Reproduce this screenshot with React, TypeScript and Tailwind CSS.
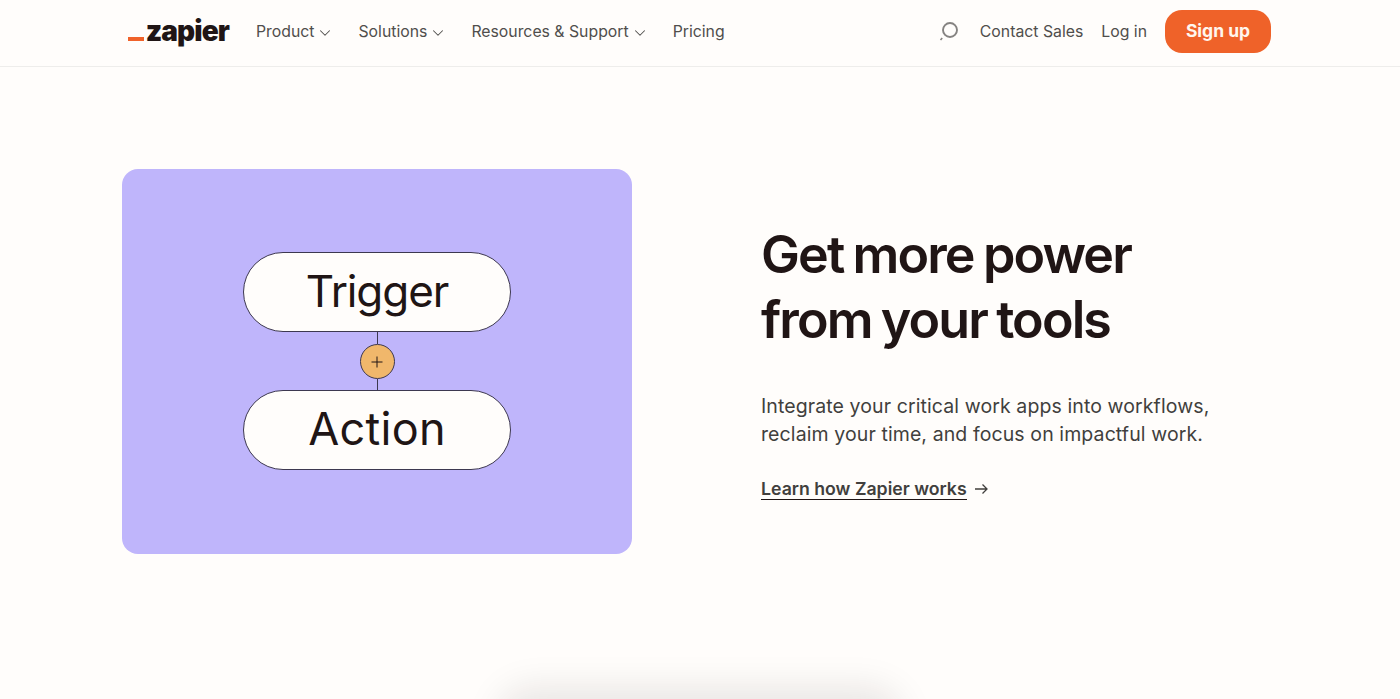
import { ChevronDown } from 'lucide-react';
import clsx from 'clsx';

const font = { fontFamily: 'Inter, "Liberation Sans", sans-serif' };

function NavItem({ label, menu = true }: { label: string; menu?: boolean }) {
    return (
        <a className="flex items-center gap-[2px] pt-[2px] text-[15.8px] leading-6 text-[#504e4c]">
            {label}
            {menu && <ChevronDown size={18} strokeWidth={1.4} className="mt-[1px]" />}
        </a>
    );
}

function Pill({ label, className }: { label: string; className?: string }) {
    return (
        <div
            className={clsx(
                'flex h-[80px] w-[268px] items-center justify-center rounded-full border border-[#3d3850] bg-[#fffdfb] pb-[3px] font-[440] leading-none text-[#201515]',
                className,
            )}
        >
            {label}
        </div>
    );
}

export default function App() {
    return (
        <div className="h-[699px] overflow-hidden bg-[#fffdfb] font-[Inter]">
            {/* Top nav */}
            <header className="flex h-[67px] items-center justify-between border-b border-[#eeedeb] pb-[4px] pl-[128px] pr-[129px]">
                <div className="flex items-center">
                    <div className="relative flex h-8 w-[101px] items-center justify-end pb-[1px]">
                        <span className="absolute bottom-[6px] left-0 h-[4px] w-[16px] bg-[#f0622a]" />
                        <span className="text-[28px] font-black leading-none tracking-[-0.9px] text-[#201515]">zapier</span>
                    </div>
                    <nav className="ml-[27px] flex items-center gap-[24px]">
                        <NavItem label="Product" />
                        <NavItem label="Solutions" />
                        <NavItem label="Resources & Support" />
                        <NavItem label="Pricing" menu={false} />
                    </nav>
                </div>
                <div className="flex items-center">
                    <svg width="20" height="20" viewBox="0 0 20 20" fill="none" className="mr-[21px]">
                        <circle cx="11" cy="9" r="7" stroke="#858381" strokeWidth="1.9" />
                        <path d="M1.5 19 L3.2 17" stroke="#858381" strokeWidth="1.6" />
                    </svg>
                    <NavItem label="Contact Sales" menu={false} />
                    <span className="ml-[18px]">
                        <NavItem label="Log in" menu={false} />
                    </span>
                    <a className="ml-[18px] flex h-[43px] w-[106px] items-center justify-center rounded-[17px] bg-[#ef6229] text-[17.5px] font-bold text-[#fff6ee]">
                        Sign up
                    </a>
                </div>
            </header>

            {/* Hero */}
            <section className="mt-[102px] flex items-center pl-[122px]">
                <div className="flex h-[385px] w-[510px] flex-col items-center justify-center rounded-[16px] bg-[#bfb5fb] pb-[1px]">
                    <Pill label="Trigger" className="text-[44px] tracking-[-1.1px]" />
                    <div className="h-[12px] w-px bg-[#3d3850]" />
                    <div className="flex h-[35px] w-[35px] items-center justify-center rounded-full border border-[#3d3850] bg-[#f0b76b] text-[#201515]">
                        <svg width="12" height="12" viewBox="0 0 12 12" stroke="currentColor" strokeWidth="1">
                            <path d="M6 0.5V11.5M0.5 6H11.5" />
                        </svg>
                    </div>
                    <div className="h-[11px] w-px bg-[#3d3850]" />
                    <Pill label="Action" className="text-[45px] tracking-[0.3px]" />
                </div>

                <div className="ml-[129px]" style={font}>
                    <h1 className="-mt-[2px] text-[52px] font-semibold leading-[65px] tracking-[-1.9px] [word-spacing:-2px] text-[#201515]">
                        Get more power
                        <br />
                        from your tools
                    </h1>
                    <p className="mt-[40px] text-[19.5px] leading-[28px] tracking-[0.1px] text-[#413f3d]">
                        Integrate your critical work apps into workflows,
                        <br />
                        reclaim your time, and focus on impactful work.
                    </p>
                    <a className="mt-[31px] flex items-center gap-[7px] text-[17.7px] font-semibold leading-[20px] text-[#413f3d]">
                        <span className="border-b border-[#201515]">Learn how Zapier works</span>
                        <svg width="14" height="12" viewBox="0 0 14 12" fill="none" stroke="#413f3d" strokeWidth="1.3">
                            <path d="M1 6H13M8.5 1.5L13 6L8.5 10.5" />
                        </svg>
                    </a>
                </div>
            </section>

            {/* Next section card, only its shadow shows above the fold */}
            <div className="mx-auto mt-[150px] h-[200px] w-[370px] rounded-[16px] bg-[#d8d7d5] shadow-[0_0_36px_16px_rgba(32,21,21,0.1)]" />
        </div>
    );
}
